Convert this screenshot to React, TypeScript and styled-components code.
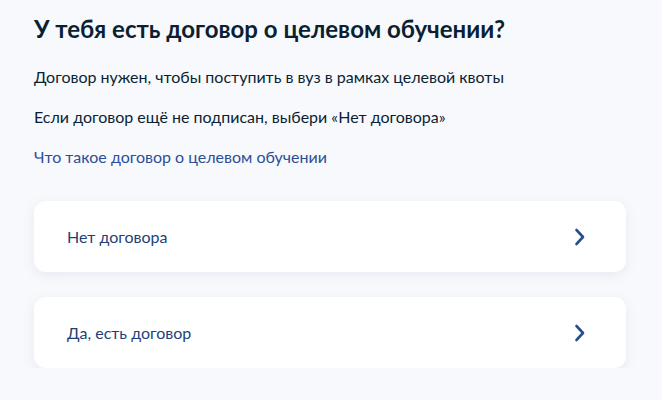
import React from "react";
import styled, { createGlobalStyle } from "styled-components";

const Global = createGlobalStyle`
  html, body { margin: 0; padding: 0; background: #f8f9fc; }
  body { font-family: Lato, "Noto Sans", sans-serif; -webkit-font-smoothing: antialiased; }
`;

const Page = styled.main`
  padding: 13px 36px 0 34px;
  display: flex;
  flex-direction: column;
`;

const Title = styled.h1`
  margin: 0;
  font-size: 24px;
  line-height: 32px;
  font-weight: 700;
  color: #0b1f33;
`;

const Paragraph = styled.p`
  margin: 24px 0 0;
  font-size: 16px;
  line-height: 16px;
  color: #0b1f33;
`;

const Link = styled.a`
  margin-top: 24px;
  font-size: 16px;
  line-height: 16px;
  color: #2c4e96;
  text-decoration: none;
`;

const Options = styled.div`
  margin-top: 36px;
  display: flex;
  flex-direction: column;
  gap: 25px;
`;

const Option = styled.button`
  display: flex;
  align-items: center;
  justify-content: space-between;
  height: 71px;
  padding: 0 40px 0 33px;
  border: none;
  border-radius: 12px;
  background: #ffffff;
  box-shadow: 0 3px 12px rgba(107, 121, 168, 0.12);
  font-family: inherit;
  font-size: 16px;
  color: #233f79;
  text-align: left;
  cursor: pointer;
`;

const Chevron = () => (
  <svg width="12" height="18" viewBox="0 0 12 18" fill="none">
    <path d="M2.5 2 L9 9 L2.5 16" stroke="#2a4c95" strokeWidth="2.6" strokeLinecap="round" strokeLinejoin="round" />
  </svg>
);

export default function App() {
  return (
    <>
      <Global />
      <Page>
        <Title>У тебя есть договор о целевом обучении?</Title>
        <Paragraph>Договор нужен, чтобы поступить в вуз в рамках целевой квоты</Paragraph>
        <Paragraph>Если договор ещё не подписан, выбери «Нет договора»</Paragraph>
        <Link href="#">Что такое договор о целевом обучении</Link>
        <Options>
          <Option>
            Нет договора
            <Chevron />
          </Option>
          <Option>
            Да, есть договор
            <Chevron />
          </Option>
        </Options>
      </Page>
    </>
  );
}
